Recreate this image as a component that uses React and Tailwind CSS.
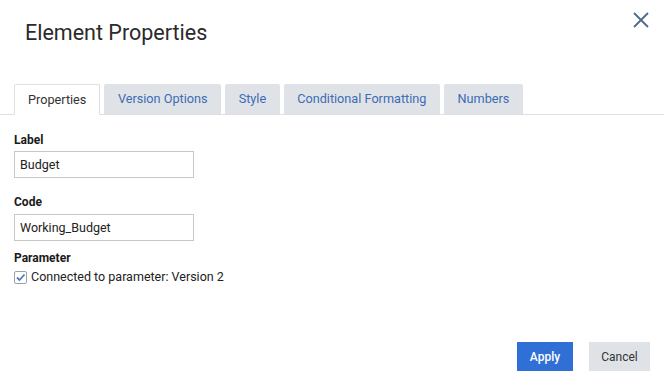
import React from 'react';

const tabs = ['Properties', 'Version Options', 'Style', 'Conditional Formatting', 'Numbers'];

const App = () => {
  return (
    <div className="w-[664px] h-[384px] bg-white flex flex-col font-['Roboto',sans-serif] text-[#222] overflow-hidden">
      {/* Header */}
      <div className="flex justify-between items-start pl-[25px] pr-[14px] pt-[20px] h-[84px]">
        <h1 className="text-[21.5px] leading-[26px] text-[#2b2b2b]">Element Properties</h1>
        <button className="mt-[-9px] text-[#4b6b8a]">
          <svg width="18" height="18" viewBox="0 0 18 18" fill="none" stroke="currentColor" strokeWidth="1.8">
            <path d="M2 2 L16 16 M16 2 L2 16" />
          </svg>
        </button>
      </div>

      {/* Tabs */}
      <div className="flex gap-[4px] pl-[14px] border-b border-[#dcdfe3] h-[31px] items-end">
        {tabs.map((t, i) =>
          i === 0 ? (
            <div key={t} className="h-[31px] px-[13px] flex items-center text-[12.7px] text-[#333] bg-white border border-[#dcdfe3] border-b-white rounded-t-[2px] mb-[-1px]">
              {t}
            </div>
          ) : (
            <div key={t} className="h-[30px] px-[13.5px] flex items-center text-[12.7px] text-[#3d6cb3] bg-[#dfe3e8] rounded-t-[2px]">
              {t}
            </div>
          )
        )}
      </div>

      {/* Form */}
      <div className="flex flex-col pl-[14px] pt-[17px] text-[12px]">
        <label className="font-bold leading-[16px] text-[#1a1a1a]">Label</label>
        <input readOnly value="Budget" className="mt-[3px] w-[180px] h-[27px] border border-[#c8c8c8] px-[5px] text-[12.5px] text-[#222] outline-none" />
        <label className="mt-[16px] font-bold leading-[16px] text-[#1a1a1a]">Code</label>
        <input readOnly value="Working_Budget" className="mt-[4px] w-[180px] h-[27px] border border-[#c8c8c8] px-[5px] text-[12.5px] text-[#222] outline-none" />
        <label className="mt-[9px] font-bold leading-[16px] text-[#1a1a1a]">Parameter</label>
        <div className="mt-[2px] flex items-center gap-[4px]">
          <span className="w-[13px] h-[13px] border border-[#9aa3ad] rounded-[2px] bg-white flex items-center justify-center">
            <svg width="11" height="11" viewBox="0 0 11 11" fill="none" stroke="#4a7fb8" strokeWidth="1.8">
              <path d="M2 5.5 L4.5 8 L9.5 2.5" />
            </svg>
          </span>
          <span className="text-[12.5px] text-[#222]">Connected to parameter: Version 2</span>
        </div>
      </div>

      {/* Footer */}
      <div className="mt-auto flex justify-end gap-[16px] pr-[14px] pb-[13px]">
        <button className="w-[56px] h-[29px] bg-[#2f6fd6] text-white text-[12px] font-medium">Apply</button>
        <button className="w-[61px] h-[29px] bg-[#dfe3e8] text-[#333] text-[12px]">Cancel</button>
      </div>
    </div>
  );
};

export default App;
